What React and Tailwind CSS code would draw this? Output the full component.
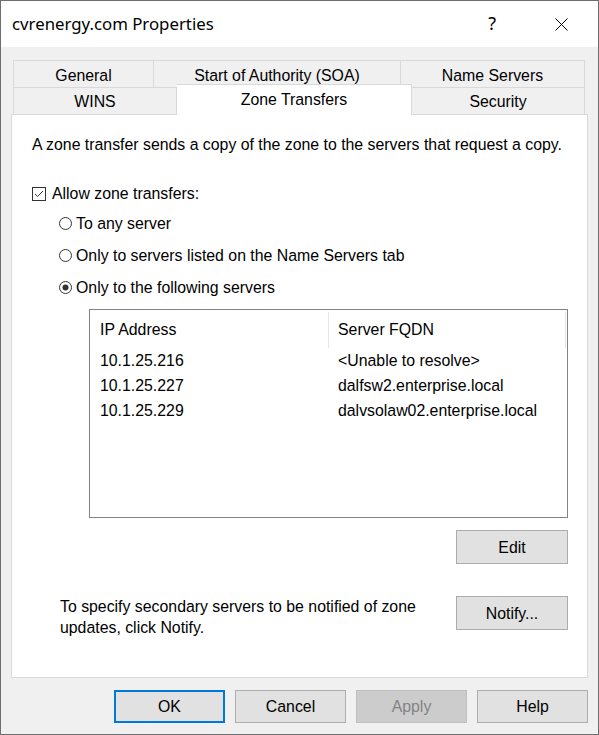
const tabsTop = [
  { label: "General", w: "w-[141px]" },
  { label: "Start of Authority (SOA)", w: "w-[247px]" },
  { label: "Name Servers", w: "w-[184px]" },
];

const servers = [
  { ip: "10.1.25.216", fqdn: "<Unable to resolve>" },
  { ip: "10.1.25.227", fqdn: "dalfsw2.enterprise.local" },
  { ip: "10.1.25.229", fqdn: "dalvsolaw02.enterprise.local" },
];

function Radio({ checked, label, className }) {
  return (
    <div className={`flex items-center h-[18px] ml-[27px] ${className}`}>
      <svg width="13" height="13" viewBox="0 0 13 13">
        <circle cx="6.5" cy="6.5" r="6" fill="white" stroke="#333" strokeWidth="1" />
        {checked && <circle cx="6.5" cy="6.5" r="3" fill="#333" />}
      </svg>
      <span className="ml-[4px] pt-px">{label}</span>
    </div>
  );
}

function Button({ children, className = "" }) {
  return (
    <div
      className={`flex items-center justify-center pt-px border border-[#adadad] bg-[#e1e1e1] ${className}`}
    >
      {children}
    </div>
  );
}

export default function App() {
  return (
    <div className="w-[599px] h-[735px] border border-[#6e6e6e] bg-[#f0f0f0] flex flex-col text-black text-[15.85px] leading-[18px] font-['Liberation_Sans',Arial,sans-serif]">
      {/* title bar */}
      <div className="h-[46px] bg-white flex items-center pl-[11px] shrink-0">
        <span className="font-['Noto_Sans',sans-serif] text-[16.8px] leading-[20px] -mt-[1px]">
          cvrenergy.com Properties
        </span>
        <div className="ml-auto flex items-center">
          <span className="font-['Noto_Sans',sans-serif] text-[18px] leading-[20px] -mt-[2px]">?</span>
          <svg className="ml-[59px] mr-[30px]" width="13" height="13" viewBox="0 0 13 13">
            <path d="M0.5 0.5 L12.5 12.5 M12.5 0.5 L0.5 12.5" stroke="#000" strokeWidth="1" />
          </svg>
        </div>
      </div>

      <div className="px-[10px] pt-[13px]">
        {/* tabs */}
        <div className="ml-[2px] w-[572px]">
          <div className="flex h-[28px]">
            {tabsTop.map((t, i) => (
              <div
                key={t.label}
                className={`${t.w} flex items-center justify-center pt-[3px] border-y border-r border-[#d9d9d9] ${i === 0 ? "border-l" : ""}`}
              >
                {t.label}
              </div>
            ))}
          </div>
          <div className="flex h-[26px]">
            <div className="w-[164px] flex items-center justify-center pt-[2px] border-x border-[#d9d9d9]">WINS</div>
            <div className="relative z-10 w-[235px] -mt-[4px] h-[31px] bg-white border-t border-r border-[#d9d9d9] flex justify-center pt-[6px]">
              Zone Transfers
            </div>
            <div className="w-[173px] flex items-center justify-center pt-[2px] border-r border-[#d9d9d9]">Security</div>
          </div>
        </div>

        {/* panel */}
        <div className="h-[564px] border border-[#d9d9d9] bg-white pt-[21px] pl-[20px]">
          <div>A zone transfer sends a copy of the zone to the servers that request a copy.</div>

          <div className="flex items-center h-[18px] mt-[31px]">
            <svg width="14" height="14" viewBox="0 0 14 14">
              <rect x="0.5" y="0.5" width="13" height="13" fill="white" stroke="#333" />
              <path d="M3 7 L5.5 9.5 L11 4" fill="none" stroke="#333" strokeWidth="1" />
            </svg>
            <span className="ml-[6px]">Allow zone transfers:</span>
          </div>

          <Radio className="mt-[11px]" label="To any server" />
          <Radio className="mt-[14px]" label="Only to servers listed on the Name Servers tab" />
          <Radio className="mt-[14px]" checked label="Only to the following servers" />

          <div className="ml-[57px] mt-[13px] w-[479px] h-[209px] border border-[#828282] bg-white">
            <div className="flex h-[38px]">
              <div className="w-[238px] pl-[10px] pt-[2px] flex items-center">IP Address</div>
              <div className="w-px h-[36px] mt-[2px] bg-[#e5e5e5]" />
              <div className="w-[236px] pl-[9px] pt-[2px] flex items-center">Server FQDN</div>
              <div className="w-px h-[36px] mt-[2px] bg-[#e5e5e5]" />
            </div>
            {servers.map((s) => (
              <div key={s.ip} className="flex h-[25px] items-center pt-px">
                <div className="w-[239px] pl-[10px]">{s.ip}</div>
                <div className="pl-[9px]">{s.fqdn}</div>
              </div>
            ))}
          </div>

          <div className="w-[536px] flex justify-end mt-[12px]">
            <Button className="w-[112px] h-[34px]">Edit</Button>
          </div>

          <div className="w-[536px] flex items-start mt-[32px]">
            <div className="ml-[28px] leading-[21px]">
              To specify secondary servers to be notified of zone
              <br />
              updates, click Notify.
            </div>
            <Button className="ml-auto w-[112px] h-[34px]">Notify...</Button>
          </div>
        </div>
      </div>

      {/* dialog buttons */}
      <div className="flex justify-end gap-[10px] mt-[12px] pr-[10px]">
        <Button className="w-[111px] h-[33px] !border-[#0078d7] shadow-[inset_0_0_0_1px_#0078d7]">OK</Button>
        <Button className="w-[111px] h-[33px]">Cancel</Button>
        <div className="w-[111px] h-[33px] flex items-center justify-center pt-px border border-[#bfbfbf] bg-[#cccccc] text-[#838383]">
          Apply
        </div>
        <Button className="w-[111px] h-[33px]">Help</Button>
      </div>
    </div>
  );
}
